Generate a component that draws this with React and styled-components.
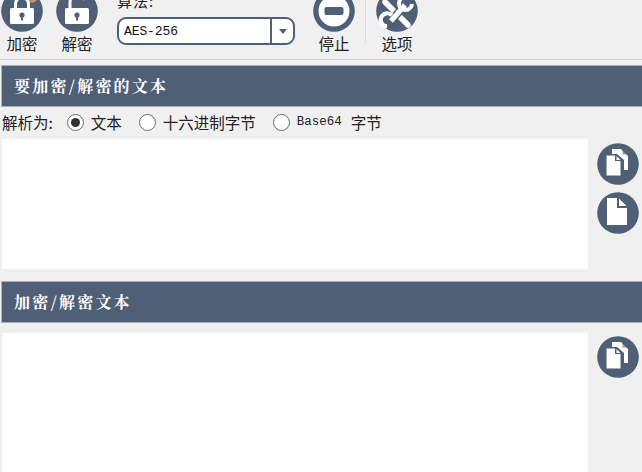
import React from "react";
import styled, { createGlobalStyle } from "styled-components";

const Global = createGlobalStyle`
  html, body { margin: 0; padding: 0; background: #f0f0f0; }
  body { font-family: "Noto Sans CJK SC", "Liberation Sans", sans-serif; }
`;
const Page = styled.div`
  width: 642px; height: 472px; overflow: hidden; background: #f0f0f0; display: flex; flex-direction: column;
`;
const Toolbar = styled.div`
  flex: none; height: 70px; margin-top: -10px; box-sizing: border-box; border-bottom: 1px solid #d2d2d2;
  display: flex; align-items: flex-start; padding-left: 1px;
`;
const ToolBtn = styled.div`
  width: 42px; margin-right: ${p => p.$gap || 0}px; display: flex; flex-direction: column; align-items: center; flex: none;
`;
const ToolLabel = styled.span`
  font-size: 15.5px; line-height: 20px; color: #222; margin-top: 1px; white-space: nowrap;
`;
const Algo = styled.div`
  width: 178px; margin-right: 18px; flex: none; display: flex; flex-direction: column; padding-top: 2px;
`;
const AlgoLabel = styled.span`
  font-size: 15px; line-height: 18px; color: #222; letter-spacing: 1px;
`;
const Select = styled.div`
  margin-top: 7px; height: 28px; box-sizing: border-box; border: 2px solid #4f5f75; border-radius: 9px;
  background: #fff; display: flex; overflow: hidden;
`;
const SelectValue = styled.span`
  flex: 1; font: 13px/25px "Liberation Mono", "DejaVu Sans Mono", monospace; color: #111; padding-left: 5px; letter-spacing: -0.1px;
`;
const SelectArrow = styled.span`
  width: 21px; border-left: 2px solid #4f5f75; display: flex; align-items: center; justify-content: center;
  &::after { content: ""; border: 4.5px solid transparent; border-top: 5px solid #4f5f75; border-bottom: 0; }
`;
const Separator = styled.div`
  width: 1px; height: 53px; background: #dcdcdc; margin: 0 10px 0 10px; flex: none;
`;
const Section = styled.div`
  flex: none; height: 42px; box-sizing: border-box; margin: ${p => p.$top}px 0 0 1px; background: #4f5f75; color: #fff;
  border: 1px solid #a9b0ba; border-right: 0;
  display: flex; align-items: center; padding: 0 0 2px 12px;
  font-family: "Noto Serif CJK SC", "Noto Sans CJK SC", sans-serif; font-size: 16px; font-weight: 700; letter-spacing: 2.2px;
`;
const Options = styled.div`
  height: 32px; box-sizing: border-box; padding-bottom: 2px; flex: none; display: flex; align-items: center; font-size: 15.5px; color: #222;
`;
const OptLabel = styled.span`
  margin-left: 2px; margin-right: 14px;
`;
const Radio = styled.label`
  display: flex; align-items: center; margin-right: 17px; white-space: nowrap;
`;
const Dot = styled.span`
  width: 17px; height: 17px; border-radius: 50%; border: 1.5px solid #6a6a6a; box-sizing: border-box; background: #fff;
  margin-right: 7px; display: flex; align-items: center; justify-content: center;
  &::after { content: ""; width: 9px; height: 9px; border-radius: 50%; background: ${p => p.$on ? "#333" : "transparent"}; }
`;
const Mono = styled.span`
  font: 12.5px "Liberation Mono", monospace; margin-right: 9px;
`;
const Body = styled.div`
  flex: none; display: flex; height: ${p => p.$h}px; margin-top: ${p => p.$top || 0}px;
`;
const Area = styled.div`
  width: 586px; margin-left: 2px; background: #fff; flex: none;
`;
const Side = styled.div`
  margin-left: 9px; padding-top: ${p => p.$pad}px; display: flex; flex-direction: column; gap: 7px;
`;

const C = "#4f5f75";
const Circle = ({ children }) => (
  <svg width="42" height="42" viewBox="0 0 42 42" style={{ display: "block" }}>
    <circle cx="21" cy="21" r="20.800" fill={C} />
    {children}
  </svg>
);
const Lock = ({ open }) => (
  <Circle>
    {!open && <path d="M27 10h9l-3 2.500h-4z" fill="#c9935f" />}
    <path d={open ? "M14 19v-7a7.500 7.500 0 0 1 14.500 -2" : "M14.500 20v-6a6.500 6.500 0 0 1 13 0v6"} fill="none" stroke="#fff" strokeWidth="3" />
    <rect x="9" y="18" width="24" height="16" rx="1.500" fill="#fff" />
    <circle cx="21" cy="25" r="2.600" fill={C} />
    <rect x="20" y="25" width="2" height="5.500" fill={C} />
  </Circle>
);
const Stop = () => (
  <Circle>
    <circle cx="21" cy="21" r="15.500" fill="#fff" />
    <rect x="11.500" y="17" width="19" height="8" rx="2" fill={C} />
  </Circle>
);
const Tools = () => (
  <Circle>
    <g fill="none" stroke="#fff" strokeLinecap="round">
      <path d="M9 12L32 35" strokeWidth="5.500" />
      <path d="M15 31L29 15" strokeWidth="8" stroke={C} strokeLinecap="butt" />
      <path d="M15 31L29 15" strokeWidth="5" strokeLinecap="butt" />
      <path d="M36 14a6.500 6.500 0 1 1-7-7" strokeWidth="4" strokeLinecap="butt" />
      <path d="M9 35a6.500 6.500 0 1 1 9-8" strokeWidth="4" strokeLinecap="butt" transform="rotate(-25 13 31)" />
    </g>
  </Circle>
);
const Doc = () => (
  <Circle>
    <path d="M10 6h10v10h10v17H10z" fill="#fff" />
    <path d="M22 6.500l7.500 7.500H22z" fill="#fff" />
  </Circle>
);
const Copy = () => (
  <Circle>
    <path d="M15 6h9l7 7v14h-4V17l-7-6h-5z" fill="#fff" />
    <path d="M25.500 6.500l5 5h-5z" fill={C} opacity="0.6" />
    <path d="M9 12h9l6 6v15H9z" fill="#fff" stroke={C} strokeWidth="1" />
    <path d="M18 12v6h6z" fill={C} />
    <path d="M19.500 13l4 4h-4z" fill="#fff" />
  </Circle>
);

export default function App() {
  return (
    <Page>
      <Global />
      <Toolbar>
        <ToolBtn $gap={13}><Lock /><ToolLabel>加密</ToolLabel></ToolBtn>
        <ToolBtn $gap={19}><Lock open /><ToolLabel>解密</ToolLabel></ToolBtn>
        <Algo>
          <AlgoLabel>算法:</AlgoLabel>
          <Select><SelectValue>AES-256</SelectValue><SelectArrow /></Select>
        </Algo>
        <ToolBtn><Stop /><ToolLabel>停止</ToolLabel></ToolBtn>
        <Separator />
        <ToolBtn><Tools /><ToolLabel>选项</ToolLabel></ToolBtn>
      </Toolbar>
      <Section $top={5}>要加密/解密的文本</Section>
      <Options>
        <OptLabel>解析为:</OptLabel>
        <Radio><Dot $on />文本</Radio>
        <Radio><Dot />十六进制字节</Radio>
        <Radio><Dot /><Mono>Base64</Mono>字节</Radio>
      </Options>
      <Body $h={130}>
        <Area />
        <Side $pad={4}><Copy /><Doc /></Side>
      </Body>
      <Section $top={12}>加密/解密文本</Section>
      <Body $h={139} $top={10}>
        <Area />
        <Side $pad={3}><Copy /></Side>
      </Body>
    </Page>
  );
}
